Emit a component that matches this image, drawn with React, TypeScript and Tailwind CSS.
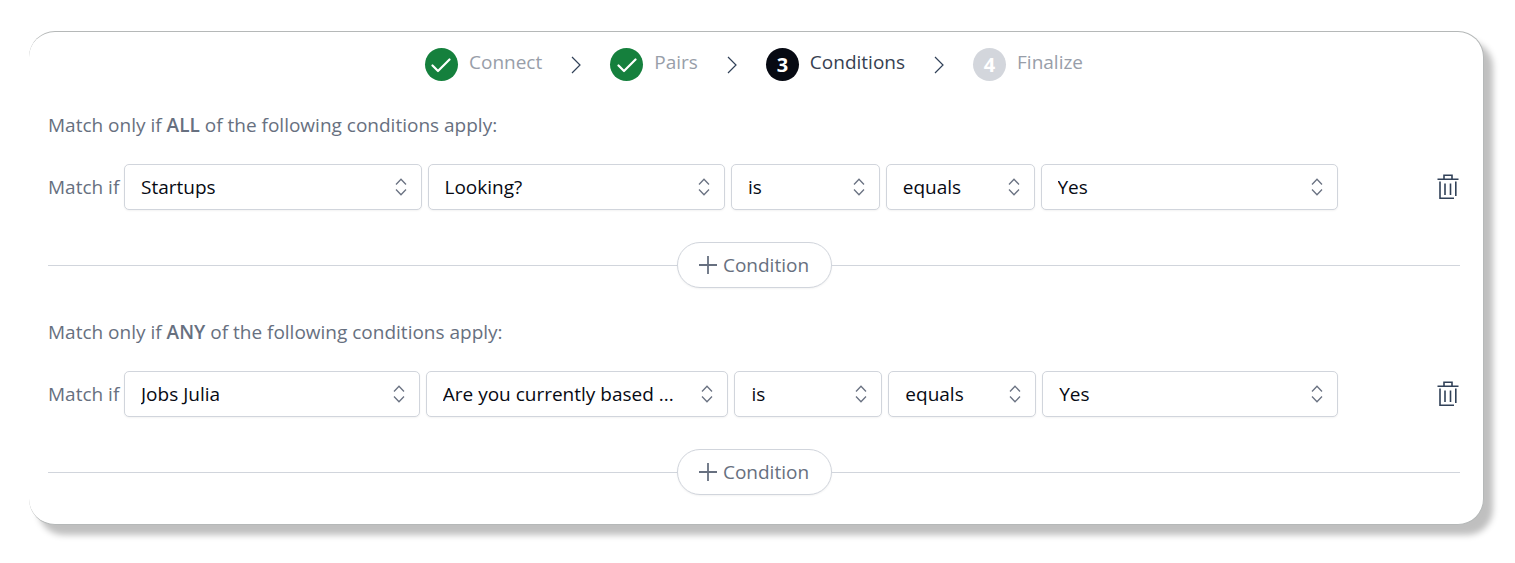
import { Fragment } from "react";

type Step = { label: string; state: "done" | "current" | "upcoming" };

type Field = { label: string; value: string };

type Group = { mode: string; columns: string; fields: Field[] };

const steps: Step[] = [
  { label: "Connect", state: "done" },
  { label: "Pairs", state: "done" },
  { label: "Conditions", state: "current" },
  { label: "Finalize", state: "upcoming" },
];

const groups: Group[] = [
  {
    mode: "ALL",
    columns: "grid-cols-[2fr_2fr_1fr_1fr_2fr]",
    fields: [
      { label: "Group", value: "Startups" },
      { label: "Question", value: "Looking?" },
      { label: "Verb", value: "is" },
      { label: "Operator", value: "equals" },
      { label: "Answer", value: "Yes" },
    ],
  },
  {
    mode: "ANY",
    columns: "grid-cols-[296fr_303fr_148fr_148fr_296fr]",
    fields: [
      { label: "Group", value: "Jobs Julia" },
      { label: "Question", value: "Are you currently based ..." },
      { label: "Verb", value: "is" },
      { label: "Operator", value: "equals" },
      { label: "Answer", value: "Yes" },
    ],
  },
];

const circleStyles = {
  done: "bg-[#15803d]",
  current: "bg-[#070a13]",
  upcoming: "bg-[#d3d6dc]",
};

function StepCircle({ state, number }: { state: Step["state"]; number: number }) {
  return (
    <span
      className={`flex size-[33px] items-center justify-center rounded-full text-xl font-bold text-white ${circleStyles[state]}`}
    >
      {state === "done" ? (
        <svg viewBox="0 0 20 16" className="h-4 w-5" fill="none" aria-hidden="true">
          <path
            d="M1.5 8.5L7 14L18.5 2.5"
            stroke="currentColor"
            strokeWidth="2.2"
            strokeLinecap="round"
            strokeLinejoin="round"
          />
        </svg>
      ) : (
        number
      )}
    </span>
  );
}

function Stepper() {
  return (
    <ol className="flex items-center justify-center">
      {steps.map((step, i) => (
        <Fragment key={step.label}>
          {i > 0 && (
            <li aria-hidden="true" className="mx-[29px]">
              <svg viewBox="0 0 10 18" className="h-[18px] w-2.5 text-slate-700" fill="none">
                <path d="M1 1L9 9L1 17" stroke="currentColor" strokeWidth="1.2" />
              </svg>
            </li>
          )}
          <li className="flex items-center gap-[11px]">
            <StepCircle state={step.state} number={i + 1} />
            <span
              className={`pb-1 ${
                step.state === "current" ? "text-[#374151]" : "text-[#989ea9]"
              }`}
            >
              {step.label}
            </span>
          </li>
        </Fragment>
      ))}
    </ol>
  );
}

function SelectField({ label, value }: Field) {
  return (
    <div className="relative">
      <select
        aria-label={label}
        className="h-[46px] w-full appearance-none rounded-[5px] border border-gray-300 bg-white pr-10 pl-4 text-[#070a13] shadow-xs"
      >
        <option>{value}</option>
      </select>
      <svg
        viewBox="0 0 12 18"
        className="pointer-events-none absolute top-3.5 right-[15px] h-[18px] w-3 text-gray-500"
        fill="none"
        aria-hidden="true"
      >
        <path
          d="M1 6.5L6 1.2L11 6.5M1 11.5L6 16.8L11 11.5"
          stroke="currentColor"
          strokeWidth="1.3"
        />
      </svg>
    </div>
  );
}

function TrashIcon() {
  return (
    <svg viewBox="0 0 22 26" className="h-[26px] w-[22px]" fill="none" aria-hidden="true">
      <path
        d="M0.5 5.2H21.5M7 5V1.2H15V5M3 7.5V24.2H17M18.8 7.5V22M8 9.5V21M13.5 9.5V21"
        stroke="currentColor"
        strokeWidth="1.6"
      />
    </svg>
  );
}

function ConditionGroup({ mode, columns, fields }: Group) {
  return (
    <section>
      <p className="leading-7">
        Match only if <strong className="font-semibold">{mode}</strong> of the following
        conditions apply:
      </p>

      <div className="mt-[25px] flex items-center">
        <span className="w-[76px] shrink-0">Match if</span>
        <div className={`grid flex-1 gap-1.5 ${columns}`}>
          {fields.map((field) => (
            <SelectField key={field.label} {...field} />
          ))}
        </div>
        <div className="flex w-[122px] justify-end pr-px">
          <button type="button" aria-label="Delete condition" className="text-slate-700">
            <TrashIcon />
          </button>
        </div>
      </div>

      {/* Divider with add button */}
      <div className="mt-8 flex items-center">
        <div className="h-px flex-1 bg-gray-300" />
        <button
          type="button"
          className="flex h-[46px] w-[155px] items-center justify-center gap-1.5 rounded-full border border-gray-300 bg-white shadow-xs"
        >
          <svg viewBox="0 0 18 18" className="size-[18px]" fill="none" aria-hidden="true">
            <path d="M9 0V18M0 9H18" stroke="currentColor" strokeWidth="1.8" />
          </svg>
          Condition
        </button>
        <div className="h-px flex-1 bg-gray-300" />
      </div>
    </section>
  );
}

export default function App() {
  return (
    <main className="bg-white pt-[31px] pr-[31px] pb-10 pl-[29px] font-['Open_Sans',sans-serif] text-[19px] text-[#677080]">
      <div className="rounded-[26px] border border-l-0 border-[#b5b8b8] bg-white pt-4 pr-[23px] pb-[29px] pl-[19px] shadow-[9px_10px_6px_rgba(0,0,0,0.25)]">
        <Stepper />
        <div className="mt-[30px] flex flex-col gap-[30px]">
          {groups.map((group) => (
            <ConditionGroup key={group.mode} {...group} />
          ))}
        </div>
      </div>
    </main>
  );
}
